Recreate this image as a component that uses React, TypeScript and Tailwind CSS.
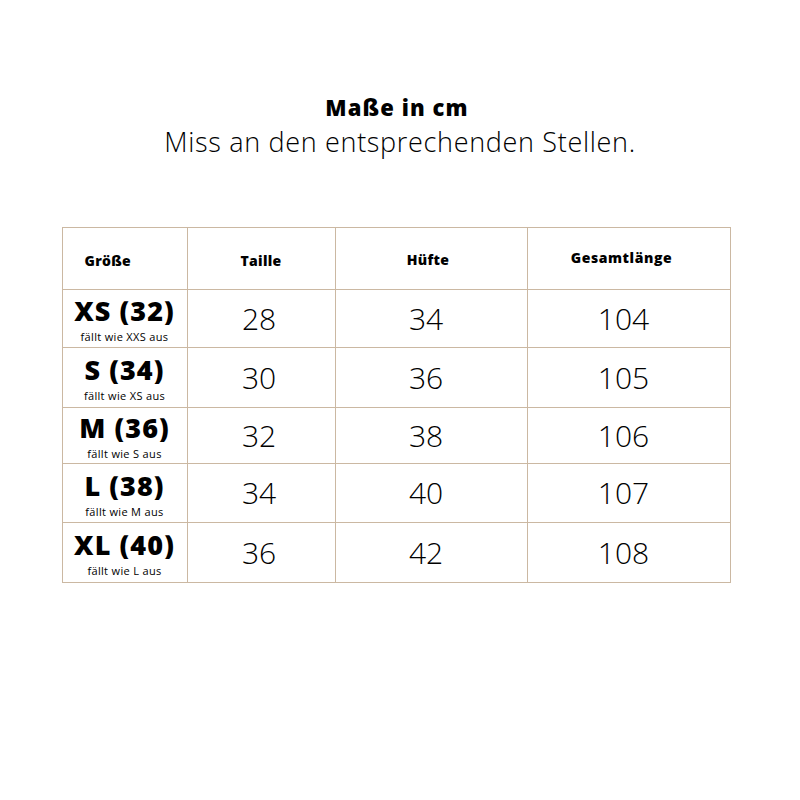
import React from 'react';

// Size chart rows: label, fit hint, measurements
const rows = [
  { size: 'XS (32)', hint: 'fällt wie XXS aus', values: ['28', '34', '104'], h: 'h-[58px]' },
  { size: 'S (34)', hint: 'fällt wie XS aus', values: ['30', '36', '105'], h: 'h-[60px]' },
  { size: 'M (36)', hint: 'fällt wie S aus', values: ['32', '38', '106'], h: 'h-[56px]' },
  { size: 'L (38)', hint: 'fällt wie M aus', values: ['34', '40', '107'], h: 'h-[59px]' },
  { size: 'XL (40)', hint: 'fällt wie L aus', values: ['36', '42', '108'], h: 'h-[60px]' },
];

const cell = 'border border-[#cbb8a2] text-center align-middle';

export default function App() {
  return (
    <div className="w-[800px] h-[800px] bg-white text-black font-['Open_Sans',sans-serif] flex flex-col items-center pt-[92px]">
      <h1 className="text-[22px] leading-[30px] font-extrabold tracking-[0.05em] mr-[6px]">Maße in cm</h1>
      <p className="text-[27px] leading-[32px] font-light mt-[4px] tracking-[0.025em]">
        Miss an den entsprechenden Stellen.
      </p>

      <table className="mt-[69px] ml-[-8px] border-collapse table-fixed">
        <colgroup>
          <col className="w-[125px]" />
          <col className="w-[148px]" />
          <col className="w-[192px]" />
          <col className="w-[203px]" />
        </colgroup>
        <thead>
          <tr className="h-[62px]">
            <th className={`${cell} text-[14px] font-extrabold !text-left pl-[22px] pt-[4px] tracking-[0.02em]`}>Größe</th>
            <th className={`${cell} text-[14px] font-extrabold pt-[4px] tracking-[0.02em]`}>Taille</th>
            <th className={`${cell} text-[14px] font-extrabold pt-[2px] pr-[6px] tracking-[0.02em]`}>Hüfte</th>
            <th className={`${cell} text-[14px] font-extrabold pb-[2px] pr-[14px] tracking-[0.04em]`}>Gesamtlänge</th>
          </tr>
        </thead>
        <tbody>
          {rows.map((r) => (
            <tr key={r.size} className={r.h}>
              <td className={cell}>
                <div className="text-[27px] leading-[36px] font-extrabold tracking-[0.04em]">{r.size}</div>
                <div className="text-[11px] leading-[15px] tracking-[0.03em]">{r.hint}</div>
              </td>
              {r.values.map((v, i) => (
                <td
                  key={i}
                  className={`${cell} text-[30px] leading-[36px] font-light ${i === 0 ? 'pr-[4px]' : 'pr-[10px]'}`}
                >
                  {v}
                </td>
              ))}
            </tr>
          ))}
        </tbody>
      </table>
    </div>
  );
}
